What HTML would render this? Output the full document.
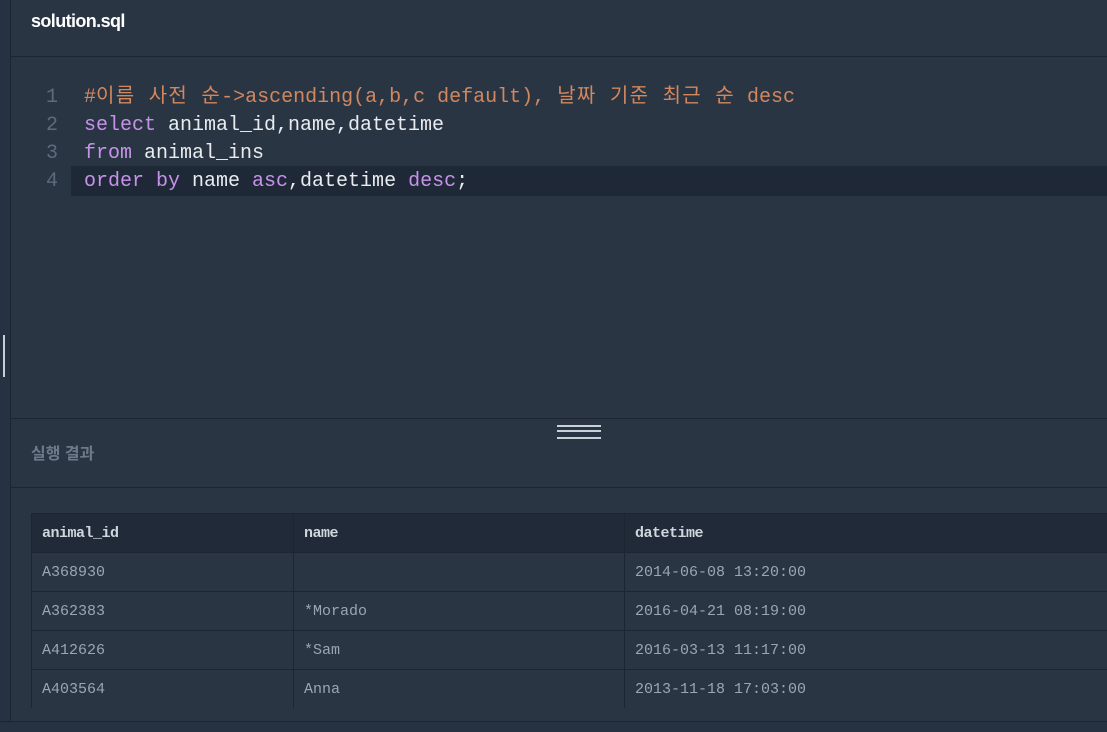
<!DOCTYPE html>
<html><head><meta charset="utf-8"><style>
body{margin:0;width:1107px;height:731px;background:#263241;overflow:hidden;position:relative;font-family:"Liberation Sans","Noto Sans CJK KR",sans-serif}
.main{position:absolute;left:10px;top:0;width:1097px;height:721px;background:#2a3544;border-left:1px solid #1c2531}
.hdr{height:56px;border-bottom:1px solid #1c2531;}
.hdr span{position:absolute;left:20px;top:11px;color:#fff;font-weight:bold;font-size:18px;letter-spacing:-0.6px}
.code{position:absolute;top:84px;left:0;right:0;font-family:"Liberation Mono","Noto Sans CJK KR",monospace;font-size:20px;}
.ln{height:28px;line-height:28px;position:relative;white-space:pre;color:#e8ecf0}
.ln .n{position:absolute;left:35px;color:#5d6b7c;width:12px}
.ln .t{position:absolute;left:73px}
.hl{background:#1f2836;margin-left:60px;margin-top:-2px;padding-top:2px}
.hl .n{left:-25px}.hl .t{left:13px}
.k{color:#c792ea}.c{color:#d2875e}
.ko{letter-spacing:1.3px}
.sep{position:absolute;top:418px;left:0;right:0;border-top:1px solid #1c2531}
.grip{position:absolute;left:546px;top:425px;width:44px;height:10px;border-top:2px solid #c8d0d8;border-bottom:2px solid #c8d0d8}
.grip:after{content:"";position:absolute;left:0;right:0;top:3px;border-top:2px solid #c8d0d8}
.res{position:absolute;left:20px;top:440px;color:#6d7a8a;font-weight:bold;font-size:16px}
.sep2{position:absolute;top:487px;left:0;right:0;border-top:1px solid #1c2531}
table{position:absolute;left:20px;top:513px;width:1077px;border-collapse:collapse;font-family:"Liberation Mono",monospace;font-size:15px;color:#9aa6b4}
td,th{border:1px solid #1c2531;height:38px;padding:0 10px;text-align:left}
th{background:#202a38;color:#d0d6dd;font-weight:bold;height:38px;letter-spacing:-0.5px}
tr.last td{border-bottom:none}
.bot{position:absolute;left:0;top:721px;width:1107px;height:10px;background:#263241;border-top:1px solid #1c2531}
.bar{position:absolute;left:3px;top:335px;width:2px;height:42px;background:#c8d0d8}
</style></head><body>
<div class="bar"></div>
<div class="main">
<div class="hdr"><span>solution.sql</span></div>
<div class="code">
<div class="ln"><span class="n">1</span><span class="t c">#<span class="ko">이름 사전 순</span>-&gt;ascending(a,b,c default), <span class="ko">날짜 기준 최근 순</span> desc</span></div>
<div class="ln"><span class="n">2</span><span class="t"><span class="k">select</span> animal_id,name,datetime</span></div>
<div class="ln"><span class="n">3</span><span class="t"><span class="k">from</span> animal_ins</span></div>
<div class="ln hl"><span class="n">4</span><span class="t"><span class="k">order by</span> name <span class="k">asc</span>,datetime <span class="k">desc</span>;</span></div>
</div>
<div class="sep"></div>
<div class="grip"></div>
<div class="res">실행 결과</div>
<div class="sep2"></div>
<table>
<tr><th style="width:241px">animal_id</th><th style="width:310px">name</th><th>datetime</th></tr>
<tr><td>A368930</td><td></td><td>2014-06-08 13:20:00</td></tr>
<tr><td>A362383</td><td>*Morado</td><td>2016-04-21 08:19:00</td></tr>
<tr><td>A412626</td><td>*Sam</td><td>2016-03-13 11:17:00</td></tr>
<tr class="last"><td>A403564</td><td>Anna</td><td>2013-11-18 17:03:00</td></tr>
</table>
</div>
<div class="bot"></div>
</body></html>
